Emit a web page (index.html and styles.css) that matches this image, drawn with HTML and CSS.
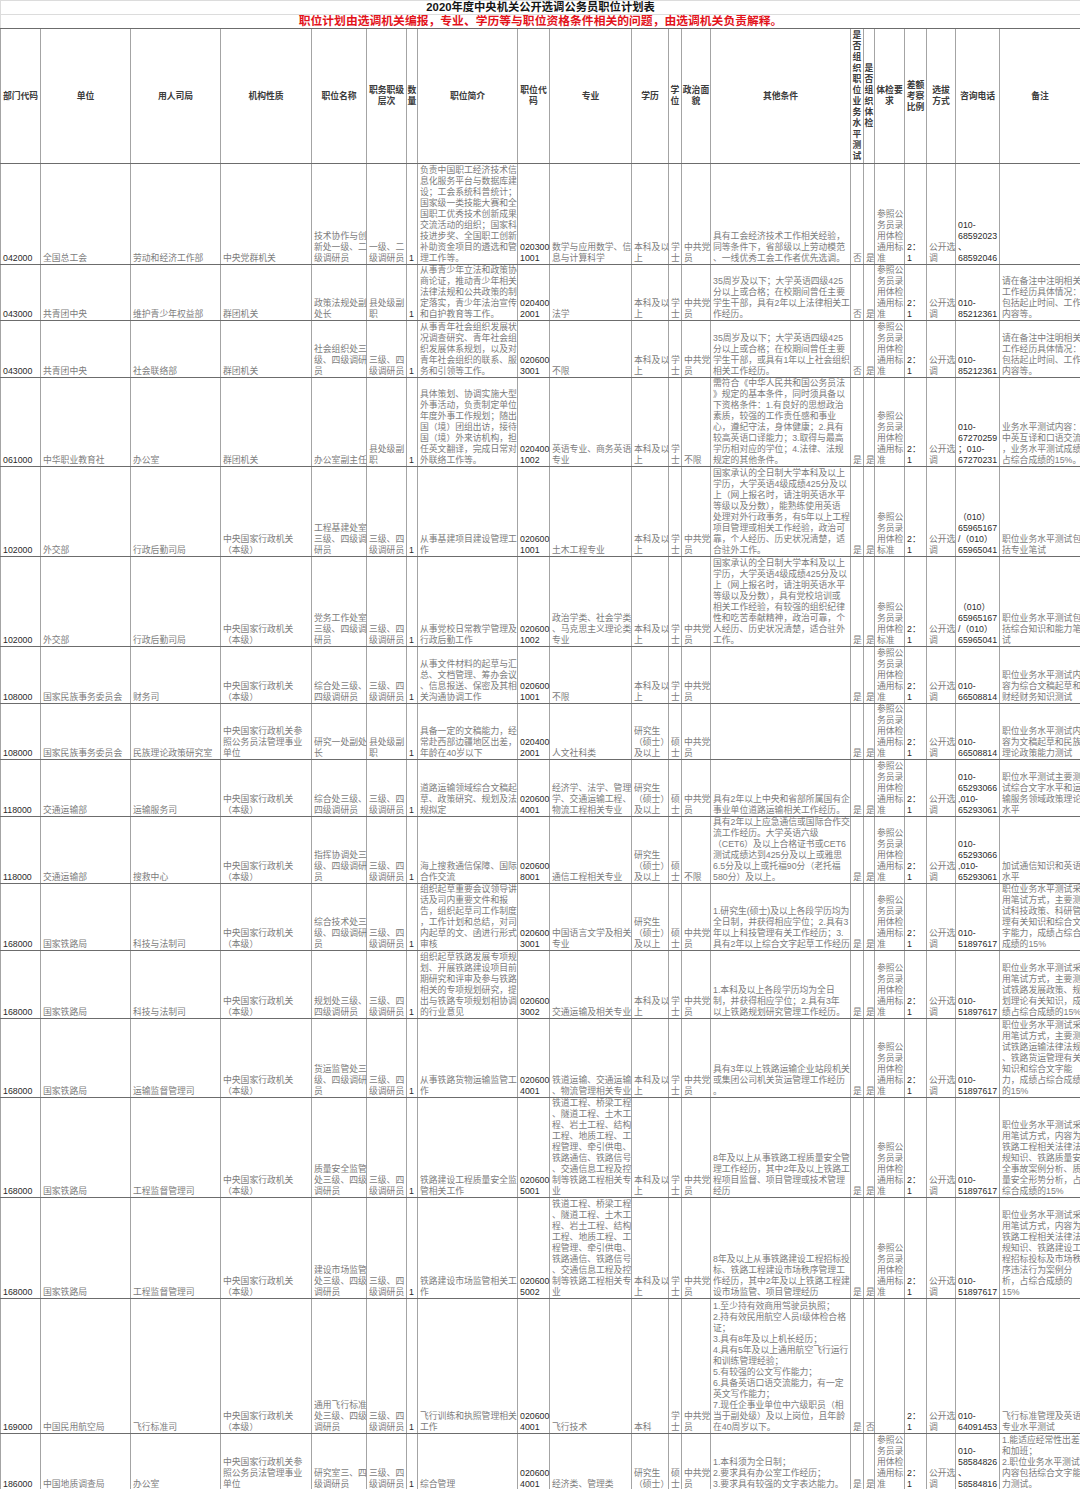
FILE: index.html
```html
<!DOCTYPE html>
<html lang="zh-CN">
<head>
<meta charset="utf-8">
<title>2020年度中央机关公开选调公务员职位计划表</title>
<link rel="stylesheet" href="styles.css">
</head>
<body>
<table class="sheet">
<colgroup>
<col class="w40"><col class="w90"><col class="w90"><col class="w91"><col class="w55"><col class="w40"><col class="w11"><col class="w100"><col class="w32"><col class="w82"><col class="w37"><col class="w13"><col class="w29"><col class="w140"><col class="w13"><col class="w11"><col class="w30"><col class="w22"><col class="w29"><col class="w44"><col class="w81">
</colgroup>
<tbody>
<tr class="h14"><td colspan="21" class="t1">2020年度中央机关公开选调公务员职位计划表</td></tr>
<tr class="h14"><td colspan="21" class="t2">职位计划由选调机关编报，专业、学历等与职位资格条件相关的问题，由选调机关负责解释。</td></tr>
<tr class="h135 hd">
<th>部门代码</th><th>单位</th><th>用人司局</th><th>机构性质</th><th>职位名称</th><th>职务职级<br>层次</th><th>数<br>量</th><th>职位简介</th><th>职位代<br>码</th><th>专业</th><th>学历</th><th>学<br>位</th><th>政治面<br>貌</th><th>其他条件</th><th>是<br>否<br>组<br>织<br>职<br>位<br>业<br>务<br>水<br>平<br>测<br>试</th><th>是<br>否<br>组<br>织<br>体<br>检</th><th>体检要<br>求</th><th>差额<br>考察<br>比例</th><th>选拔<br>方式</th><th>咨询电话</th><th>备注</th>
</tr>

<tr class="h101">
<td class="n">042000</td><td>全国总工会</td><td>劳动和经济工作部</td><td>中央党群机关</td>
<td>技术协作与创<br>新处一级、二<br>级调研员</td><td>一级、二<br>级调研员</td><td class="n">1</td>
<td>负责中国职工经济技术信<br>息化服务平台与数据库建<br>设；工会系统科普统计；<br>国家级一类技能大赛和全<br>国职工优秀技术创新成果<br>交流活动的组织；国家科<br>技进步奖、全国职工创新<br>补助资金项目的遴选和管<br>理工作等。</td>
<td class="n">020300<br>1001</td><td>数学与应用数学、信<br>息与计算科学</td><td>本科及以<br>上</td><td>学<br>士</td><td>中共党<br>员</td>
<td>具有工会经济技术工作相关经验，<br>同等条件下，省部级以上劳动模范<br>、一线优秀工会工作者优先选调。</td>
<td>否</td><td>是</td><td>参照公<br>务员录<br>用体检<br>通用标<br>准</td><td class="n">2：<br>1</td><td>公开选<br>调</td><td class="n">010-<br>68592023<br>、<br>68592046</td><td></td>
</tr>

<tr class="h56">
<td class="n">043000</td><td>共青团中央</td><td>维护青少年权益部</td><td>群团机关</td>
<td>政策法规处副<br>处长</td><td>县处级副<br>职</td><td class="n">1</td>
<td>从事青少年立法和政策协<br>商论证，推动青少年相关<br>法律法规和公共政策的制<br>定落实，青少年法治宣传<br>和自护教育等工作。</td>
<td class="n">020400<br>2001</td><td>法学</td><td>本科及以<br>上</td><td>学<br>士</td><td>中共党<br>员</td>
<td>35周岁及以下；大学英语四级425<br>分以上或合格；在校期间曾任主要<br>学生干部，具有2年以上法律相关工<br>作经历。</td>
<td>否</td><td>是</td><td>参照公<br>务员录<br>用体检<br>通用标<br>准</td><td class="n">2：<br>1</td><td>公开选<br>调</td><td class="n">010-<br>85212361</td>
<td>请在备注中注明相关<br>工作经历具体情况：<br>包括起止时间、工作<br>内容等。</td>
</tr>

<tr class="h57">
<td class="n">043000</td><td>共青团中央</td><td>社会联络部</td><td>群团机关</td>
<td>社会组织处三<br>级、四级调研<br>员</td><td>三级、四<br>级调研员</td><td class="n">1</td>
<td>从事青年社会组织发展状<br>况调查研究、青年社会组<br>织发展体系规划，以及对<br>青年社会组织的联系、服<br>务和引领等工作。</td>
<td class="n">020600<br>3001</td><td>不限</td><td>本科及以<br>上</td><td>学<br>士</td><td>中共党<br>员</td>
<td>35周岁及以下；大学英语四级425<br>分以上或合格；在校期间曾任主要<br>学生干部，或具有1年以上社会组织<br>相关工作经历。</td>
<td>否</td><td>是</td><td>参照公<br>务员录<br>用体检<br>通用标<br>准</td><td class="n">2：<br>1</td><td>公开选<br>调</td><td class="n">010-<br>85212361</td>
<td>请在备注中注明相关<br>工作经历具体情况：<br>包括起止时间、工作<br>内容等。</td>
</tr>

<tr class="h89">
<td class="n">061000</td><td>中华职业教育社</td><td>办公室</td><td>群团机关</td>
<td>办公室副主任</td><td>县处级副<br>职</td><td class="n">1</td>
<td>具体策划、协调实施大型<br>外事活动，负责制定单位<br>年度外事工作规划；随出<br>国（境）团组出访，接待<br>国（境）外来访机构，担<br>任英文翻译，完成日常对<br>外联络工作等。</td>
<td class="n">020400<br>1002</td><td>英语专业、商务英语<br>专业</td><td>本科及以<br>上</td><td>学<br>士</td><td>不限</td>
<td>需符合《中华人民共和国公务员法<br>》规定的基本条件，同时须具备以<br>下资格条件：1.有良好的思想政治<br>素质，较强的工作责任感和事业<br>心，遵纪守法，身体健康；2.具有<br>较高英语口译能力；3.取得与最高<br>学历相对应的学位；4.法律、法规<br>规定的其他条件。</td>
<td>是</td><td>是</td><td>参照公<br>务员录<br>用体检<br>通用标<br>准</td><td class="n">2：<br>1</td><td>公开选<br>调</td><td class="n">010-<br>67270259<br>；010-<br>67270231</td>
<td>业务水平测试内容：<br>中英互译和口语交流<br>，业务水平测试成绩<br>占综合成绩的15%。</td>
</tr>

<tr class="h90">
<td class="n">102000</td><td>外交部</td><td>行政后勤司局</td><td>中央国家行政机关<br>（本级）</td>
<td>工程基建处室<br>三级、四级调<br>研员</td><td>三级、四<br>级调研员</td><td class="n">1</td>
<td>从事基建项目建设管理工<br>作</td>
<td class="n">020600<br>1001</td><td>土木工程专业</td><td>本科及以<br>上</td><td>学<br>士</td><td>中共党<br>员</td>
<td>国家承认的全日制大学本科及以上<br>学历，大学英语4级成绩425分及以<br>上（网上报名时，请注明英语水平<br>等级以及分数），能熟练使用英语<br>处理对外行政事务，有5年以上工程<br>项目管理或相关工作经验，政治可<br>靠，个人经历、历史状况清楚，适<br>合驻外工作。</td>
<td>是</td><td>是</td><td>参照公<br>务员录<br>用体检<br>标准</td><td class="n">2：<br>1</td><td>公开选<br>调</td><td class="n">（010）<br>65965167<br>/（010）<br>65965041</td>
<td>职位业务水平测试包<br>括专业笔试</td>
</tr>

<tr class="h90">
<td class="n">102000</td><td>外交部</td><td>行政后勤司局</td><td>中央国家行政机关<br>（本级）</td>
<td>党务工作处室<br>三级、四级调<br>研员</td><td>三级、四<br>级调研员</td><td class="n">1</td>
<td>从事党校日常教学管理及<br>行政后勤工作</td>
<td class="n">020600<br>1002</td><td>政治学类、社会学类<br>、马克思主义理论类<br>专业</td><td>本科及以<br>上</td><td>学<br>士</td><td>中共党<br>员</td>
<td>国家承认的全日制大学本科及以上<br>学历，大学英语4级成绩425分及以<br>上（网上报名时，请注明英语水平<br>等级以及分数），具有党校培训或<br>相关工作经验，有较强的组织纪律<br>性和吃苦奉献精神，政治可靠，个<br>人经历、历史状况清楚，适合驻外<br>工作。</td>
<td>是</td><td>是</td><td>参照公<br>务员录<br>用体检<br>标准</td><td class="n">2：<br>1</td><td>公开选<br>调</td><td class="n">（010）<br>65965167<br>/（010）<br>65965041</td>
<td>职位业务水平测试包<br>括综合知识和能力笔<br>试</td>
</tr>

<tr class="h57">
<td class="n">108000</td><td>国家民族事务委员会</td><td>财务司</td><td>中央国家行政机关<br>（本级）</td>
<td>综合处三级、<br>四级调研员</td><td>三级、四<br>级调研员</td><td class="n">1</td>
<td>从事文件材料的起草与汇<br>总、文档管理、筹办会议<br>、信息报送、保密及其相<br>关沟通协调工作</td>
<td class="n">020600<br>1001</td><td>不限</td><td>本科及以<br>上</td><td>学<br>士</td><td>中共党<br>员</td>
<td></td>
<td>是</td><td>是</td><td>参照公<br>务员录<br>用体检<br>通用标<br>准</td><td class="n">2：<br>1</td><td>公开选<br>调</td><td class="n">010-<br>66508814</td>
<td>职位业务水平测试内<br>容为综合文稿起草和<br>财经财务知识测试</td>
</tr>

<tr class="h55">
<td class="n">108000</td><td>国家民族事务委员会</td><td>民族理论政策研究室</td><td>中央国家行政机关参<br>照公务员法管理事业<br>单位</td>
<td>研究一处副处<br>长</td><td>县处级副<br>职</td><td class="n">1</td>
<td>具备一定的文稿能力，经<br>常赴西部边疆地区出差，<br>年龄在40岁以下</td>
<td class="n">020400<br>2001</td><td>人文社科类</td><td>研究生<br>（硕士）<br>及以上</td><td>硕<br>士</td><td>中共党<br>员</td>
<td></td>
<td>是</td><td>是</td><td>参照公<br>务员录<br>用体检<br>通用标<br>准</td><td class="n">2：<br>1</td><td>公开选<br>调</td><td class="n">010-<br>66508814</td>
<td>职位业务水平测试内<br>容为文稿起草和民族<br>理论政策能力测试</td>
</tr>

<tr class="h57">
<td class="n">118000</td><td>交通运输部</td><td>运输服务司</td><td>中央国家行政机关<br>（本级）</td>
<td>综合处三级、<br>四级调研员</td><td>三级、四<br>级调研员</td><td class="n">1</td>
<td>道路运输领域综合文稿起<br>草、政策研究、规划及法<br>规拟定</td>
<td class="n">020600<br>4001</td><td>经济学、法学、管理<br>学、交通运输工程、<br>物流工程相关专业</td><td>研究生<br>（硕士）<br>及以上</td><td>硕<br>士</td><td>中共党<br>员</td>
<td>具有2年以上中央和省部所属国有企<br>事业单位道路运输相关工作经历。</td>
<td>是</td><td>是</td><td>参照公<br>务员录<br>用体检<br>通用标<br>准</td><td class="n">2：<br>1</td><td>公开选<br>调</td><td class="n">010-<br>65293066<br>,010-<br>65293061</td>
<td>职位水平测试主要测<br>试综合文字水平和运<br>输服务领域政策理论<br>水平</td>
</tr>

<tr class="h67">
<td class="n">118000</td><td>交通运输部</td><td>搜救中心</td><td>中央国家行政机关<br>（本级）</td>
<td>指挥协调处三<br>级、四级调研<br>员</td><td>三级、四<br>级调研员</td><td class="n">1</td>
<td>海上搜救通信保障、国际<br>合作交流</td>
<td class="n">020600<br>8001</td><td>通信工程相关专业</td><td>研究生<br>（硕士）<br>及以上</td><td>硕<br>士</td><td>不限</td>
<td>具有2年以上应急通信或国际合作交<br>流工作经历。大学英语六级<br>（CET6）及以上合格证书或CET6<br>测试成绩达到425分及以上或雅思<br>6.5分及以上或托福90分（老托福<br>580分）及以上。</td>
<td>是</td><td>是</td><td>参照公<br>务员录<br>用体检<br>通用标<br>准</td><td class="n">2：<br>1</td><td>公开选<br>调</td><td class="n">010-<br>65293066<br>,010-<br>65293061</td>
<td>加试通信知识和英语<br>水平</td>
</tr>

<tr class="h67">
<td class="n">168000</td><td>国家铁路局</td><td>科技与法制司</td><td>中央国家行政机关<br>（本级）</td>
<td>综合技术处三<br>级、四级调研<br>员</td><td>三级、四<br>级调研员</td><td class="n">1</td>
<td>组织起草重要会议领导讲<br>话及司内重要文件和报<br>告，组织起草司工作制度<br>，工作计划和总结，对司<br>内起草的文、函进行形式<br>审核</td>
<td class="n">020600<br>3001</td><td>中国语言文学及相关<br>专业</td><td>研究生<br>（硕士）<br>及以上</td><td>硕<br>士</td><td>中共党<br>员</td>
<td>1.研究生(硕士)及以上各段学历均为<br>全日制，并获得相应学位；2.具有3<br>年以上科技管理有关工作经历；3.<br>具有2年以上综合文字起草工作经历</td>
<td>是</td><td>是</td><td>参照公<br>务员录<br>用体检<br>通用标<br>准</td><td class="n">2：<br>1</td><td>公开选<br>调</td><td class="n">010-<br>51897617</td>
<td>职位业务水平测试采<br>用笔试方式，主要测<br>试科技政策、科研管<br>理有关知识和综合文<br>字能力，成绩占综合<br>成绩的15%</td>
</tr>

<tr class="h68">
<td class="n">168000</td><td>国家铁路局</td><td>科技与法制司</td><td>中央国家行政机关<br>（本级）</td>
<td>规划处三级、<br>四级调研员</td><td>三级、四<br>级调研员</td><td class="n">1</td>
<td>组织起草铁路发展专项规<br>划、开展铁路建设项目前<br>期研究和评审及参与铁路<br>相关的专项规划研究，提<br>出与铁路专项规划相协调<br>的行业意见</td>
<td class="n">020600<br>3002</td><td>交通运输及相关专业</td><td>本科及以<br>上</td><td>学<br>士</td><td>中共党<br>员</td>
<td>1.本科及以上各段学历均为全日<br>制，并获得相应学位；2.具有3年<br>以上铁路规划研究管理工作经历。</td>
<td>是</td><td>是</td><td>参照公<br>务员录<br>用体检<br>通用标<br>准</td><td class="n">2：<br>1</td><td>公开选<br>调</td><td class="n">010-<br>51897617</td>
<td>职位业务水平测试采<br>用笔试方式，主要测<br>试铁路发展政策、规<br>划理论有关知识，成<br>绩占综合成绩的15%</td>
</tr>

<tr class="h79">
<td class="n">168000</td><td>国家铁路局</td><td>运输监督管理司</td><td>中央国家行政机关<br>（本级）</td>
<td>货运监管处三<br>级、四级调研<br>员</td><td>三级、四<br>级调研员</td><td class="n">1</td>
<td>从事铁路货物运输监管工<br>作</td>
<td class="n">020600<br>4001</td><td>铁道运输、交通运输<br>、物流管理相关专业</td><td>本科及以<br>上</td><td>学<br>士</td><td>中共党<br>员</td>
<td>具有3年以上铁路运输企业站段机关<br>或集团公司机关货运管理工作经历<br>。</td>
<td>是</td><td>是</td><td>参照公<br>务员录<br>用体检<br>通用标<br>准</td><td class="n">2：<br>1</td><td>公开选<br>调</td><td class="n">010-<br>51897617</td>
<td>职位业务水平测试采<br>用笔试方式，主要测<br>试铁路运输法律法规<br>、铁路货运管理有关<br>知识和综合文字能<br>力，成绩占综合成绩<br>的15%</td>
</tr>

<tr class="h100">
<td class="n">168000</td><td>国家铁路局</td><td>工程监督管理司</td><td>中央国家行政机关<br>（本级）</td>
<td>质量安全监管<br>处三级、四级<br>调研员</td><td>三级、四<br>级调研员</td><td class="n">1</td>
<td>铁路建设工程质量安全监<br>管相关工作</td>
<td class="n">020600<br>5001</td><td>铁道工程、桥梁工程<br>、隧道工程、土木工<br>程、岩土工程、结构<br>工程、地质工程、工<br>程管理、牵引供电、<br>铁路通信、铁路信号<br>、交通信息工程及控<br>制等铁路工程相关专<br>业</td><td>本科及以<br>上</td><td>学<br>士</td><td>中共党<br>员</td>
<td>8年及以上从事铁路工程质量安全管<br>理工作经历，其中2年及以上铁路工<br>程项目监督、项目管理或技术管理<br>经历</td>
<td>是</td><td>是</td><td>参照公<br>务员录<br>用体检<br>通用标<br>准</td><td class="n">2：<br>1</td><td>公开选<br>调</td><td class="n">010-<br>51897617</td>
<td>职位业务水平测试采<br>用笔试方式，内容为<br>铁路工程相关法律法<br>规知识、铁路质量安<br>全事故案例分析、质<br>量安全形势分析，占<br>综合成绩的15%</td>
</tr>

<tr class="h101">
<td class="n">168000</td><td>国家铁路局</td><td>工程监督管理司</td><td>中央国家行政机关<br>（本级）</td>
<td>建设市场监管<br>处三级、四级<br>调研员</td><td>三级、四<br>级调研员</td><td class="n">1</td>
<td>铁路建设市场监管相关工<br>作</td>
<td class="n">020600<br>5002</td><td>铁道工程、桥梁工程<br>、隧道工程、土木工<br>程、岩土工程、结构<br>工程、地质工程、工<br>程管理、牵引供电、<br>铁路通信、铁路信号<br>、交通信息工程及控<br>制等铁路工程相关专<br>业</td><td>本科及以<br>上</td><td>学<br>士</td><td>中共党<br>员</td>
<td>8年及以上从事铁路建设工程招标投<br>标、铁路工程建设市场秩序管理工<br>作经历，其中2年及以上铁路工程建<br>设市场监管、项目管理经历</td>
<td>是</td><td>是</td><td>参照公<br>务员录<br>用体检<br>通用标<br>准</td><td class="n">2：<br>1</td><td>公开选<br>调</td><td class="n">010-<br>51897617</td>
<td>职位业务水平测试采<br>用笔试方式，内容为<br>铁路工程相关法律法<br>规知识、铁路建设工<br>程招标投标及市场秩<br>序违法行为案例分<br>析，占综合成绩的<br>15%</td>
</tr>

<tr class="h135">
<td class="n">169000</td><td>中国民用航空局</td><td>飞行标准司</td><td>中央国家行政机关<br>（本级）</td>
<td>通用飞行标准<br>处三级、四级<br>调研员</td><td>三级、四<br>级调研员</td><td class="n">1</td>
<td>飞行训练和执照管理相关<br>工作</td>
<td class="n">020600<br>4001</td><td>飞行技术</td><td>本科</td><td>学<br>士</td><td>中共党<br>员</td>
<td>1.至少持有效商用驾驶员执照；<br>2.持有效民用航空人员I级体检合格<br>证；<br>3.具有8年及以上机长经历；<br>4.具有5年及以上通用航空飞行运行<br>和训练管理经验；<br>5.有较强的公文写作能力；<br>6.具备英语口语交流能力，有一定<br>英文写作能力；<br>7.现任企事业单位中六级职员（相<br>当于副处级）及以上岗位，且年龄<br>在40周岁以下。</td>
<td>是</td><td>否</td><td></td><td class="n">2：<br>1</td><td>公开选<br>调</td><td class="n">010-<br>64091453</td>
<td>飞行标准管理及英语<br>专业水平测试</td>
</tr>

<tr class="h57 last">
<td class="n">186000</td><td>中国地质调查局</td><td>办公室</td><td>中央国家行政机关参<br>照公务员法管理事业<br>单位</td>
<td>研究室三、四<br>级调研员</td><td>三级、四<br>级调研员</td><td class="n">1</td>
<td>综合管理</td>
<td class="n">020600<br>4001</td><td>经济类、管理类</td><td>研究生<br>（硕士）</td><td>硕<br>士</td><td>中共党<br>员</td>
<td>1.本科须为全日制；<br>2.要求具有办公室工作经历；<br>3.要求具有较强的文字表达能力。</td>
<td>是</td><td>是</td><td>参照公<br>务员录<br>用体检<br>通用标<br>准</td><td class="n">2：<br>1</td><td>公开选<br>调</td><td class="n">010-<br>58584826<br>、<br>58584816</td>
<td>1.能适应经常性出差<br>和加班；<br>2.职位业务水平测试<br>内容包括综合文字能<br>力测试。</td>
</tr>
</tbody>
</table>
</body>
</html>
```

FILE: styles.css
```css
html, body {
  margin: 0;
  padding: 0;
  background: #ffffff;
  overflow: hidden;
}

.sheet {
  border-collapse: collapse;
  table-layout: fixed;
  width: 1080px;
  font-family: "Liberation Sans", "Noto Sans CJK SC", sans-serif;
  font-size: 8.8px;
  line-height: 11px;
  color: #7c7c7c;
}

.w11 { width: 11px; }
.w13 { width: 13px; }
.w22 { width: 22px; }
.w29 { width: 29px; }
.w30 { width: 30px; }
.w32 { width: 32px; }
.w37 { width: 37px; }
.w40 { width: 40px; }
.w44 { width: 44px; }
.w55 { width: 55px; }
.w81 { width: 81px; }
.w82 { width: 82px; }
.w90 { width: 90px; }
.w91 { width: 91px; }
.w100 { width: 100px; }
.w140 { width: 140px; }

.sheet td,
.sheet th {
  border: 1px solid #a4a4a4;
  border-bottom-color: #6c6c6c;
  padding: 0 0 0 2px;
  white-space: nowrap;
  vertical-align: bottom;
  text-align: left;
  font-weight: 400;
}

.sheet th {
  font-weight: 700;
  color: #3c3c3c;
  text-align: center;
  vertical-align: middle;
  padding: 0;
}

.sheet td.n {
  color: #2a2a2a;
}

.sheet td.t1,
.sheet td.t2 {
  text-align: center;
  vertical-align: middle;
  padding: 0;
  font-weight: 700;
  border-color: #dcdcdc;
}

.sheet td.t1 {
  font-size: 11.3px;
  line-height: 13px;
  color: #151515;
}

.sheet td.t2 {
  font-size: 11.8px;
  line-height: 13px;
  color: #e3131b;
  border-bottom-color: #6c6c6c;
}

.h14 { height: 14px; }
.h55 { height: 55px; }
.h56 { height: 56px; }
.h57 { height: 57px; }
.h67 { height: 67px; }
.h68 { height: 68px; }
.h79 { height: 79px; }
.h89 { height: 89px; }
.h90 { height: 90px; }
.h100 { height: 100px; }
.h101 { height: 101px; }
.h135 { height: 135px; }
```
